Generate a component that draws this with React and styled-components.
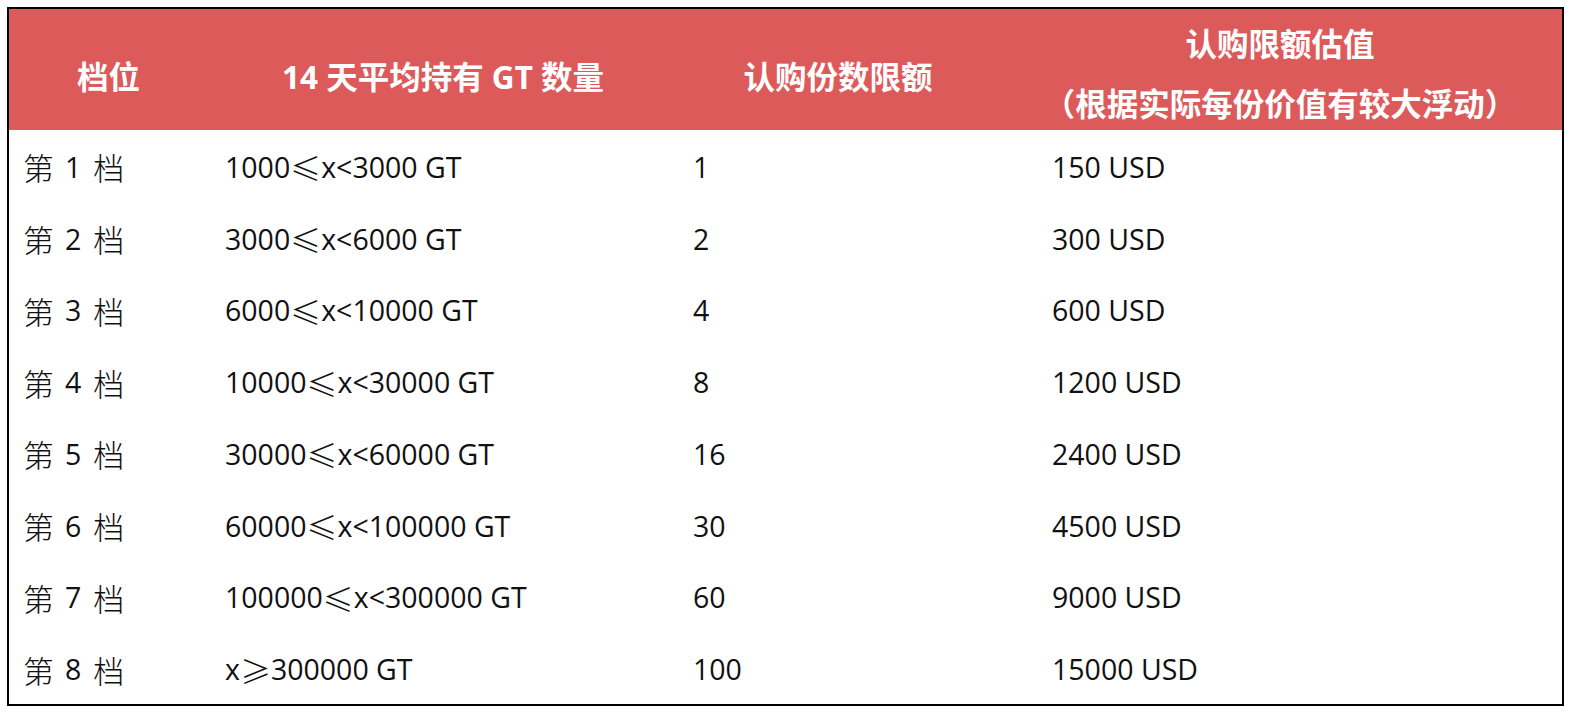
import React from "react";
import styled, { createGlobalStyle } from "styled-components";

const Global = createGlobalStyle`
  html, body { margin: 0; padding: 0; background: #ffffff; }
  body { font-family: "Open Sans", "Noto Sans CJK SC", sans-serif; }
`;

const Page = styled.div`
  padding: 7px;
  width: 1573px;
  box-sizing: border-box;
`;

const Table = styled.div`
  border: 2px solid #000;
  width: 1557px;
  box-sizing: border-box;
  display: grid;
  grid-template-columns: 199px 470px 320px 1fr;
  grid-template-rows: 121px repeat(8, 71.75px);
`;

const HeadCell = styled.div`
  background: #dd5a5b;
  color: #ffffff;
  font-weight: 700;
  font-size: 31.5px;
  display: flex;
  flex-direction: column;
  align-items: center;
  justify-content: center;
  gap: ${(p) => (p.$gap ? p.$gap : "0px")};
  line-height: 36px;
  white-space: nowrap;
  padding-top: ${(p) => (p.$pt ? p.$pt : "0px")};
`;

const Cell = styled.div`
  display: flex;
  align-items: center;
  padding-left: ${(p) => p.$pl}px;
  padding-top: 2px;
  font-size: 28.5px;
  color: #111111;
  white-space: nowrap;
`;

const Tier = styled.span`
  font-family: "Noto Sans CJK SC", sans-serif;
  font-weight: 300;
  font-size: 31px;
`;

const Num = styled.span`
  font-family: "Open Sans", sans-serif;
  font-size: 28.5px;
  margin: 0 12px 0 11px;
`;

const Sym = styled.span`
  font-family: "Noto Sans CJK SC", sans-serif;
  font-weight: 300;
  font-size: 31px;
  line-height: 1;
`;

const rows = [
  ["1", "1000", "≤", "x<3000 GT", "1", "150 USD"],
  ["2", "3000", "≤", "x<6000 GT", "2", "300 USD"],
  ["3", "6000", "≤", "x<10000 GT", "4", "600 USD"],
  ["4", "10000", "≤", "x<30000 GT", "8", "1200 USD"],
  ["5", "30000", "≤", "x<60000 GT", "16", "2400 USD"],
  ["6", "60000", "≤", "x<100000 GT", "30", "4500 USD"],
  ["7", "100000", "≤", "x<300000 GT", "60", "9000 USD"],
  ["8", "x", "≥", "300000 GT", "100", "15000 USD"],
];

export default function App() {
  return (
    <Page>
      <Global />
      <Table>
        <HeadCell $pt="14px">档位</HeadCell>
        <HeadCell $pt="14px">14 天平均持有 GT 数量</HeadCell>
        <HeadCell $pt="14px">认购份数限额</HeadCell>
        <HeadCell $gap="24px" $pt="8px">
          <span>认购限额估值</span>
          <span>（根据实际每份价值有较大浮动）</span>
        </HeadCell>
        {rows.map((r) => (
          <React.Fragment key={r[0]}>
            <Cell $pl={14}>
              <Tier>第</Tier>
              <Num>{r[0]}</Num>
              <Tier>档</Tier>
            </Cell>
            <Cell $pl={17}>
              {r[1]}
              <Sym>{r[2]}</Sym>
              {r[3]}
            </Cell>
            <Cell $pl={15}>{r[4]}</Cell>
            <Cell $pl={54}>{r[5]}</Cell>
          </React.Fragment>
        ))}
      </Table>
    </Page>
  );
}
